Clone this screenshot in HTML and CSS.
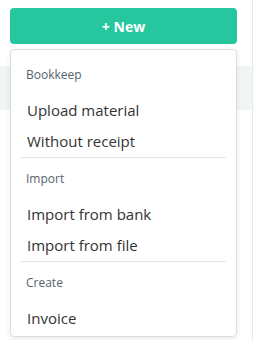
FILE: index.html
```html
<!DOCTYPE html>
<html lang="en">
<head>
    <meta charset="UTF-8">
    <meta name="viewport" content="width=device-width, initial-scale=1.0">
    <title>New</title>
    <link rel="stylesheet" href="styles.css">
</head>
<body>
    <div class="sidebar">
        <button class="new-btn" type="button">+ New</button>
        <div class="list">
            <div class="list-row active"></div>
            <div class="list-row"></div>
        </div>

        <div class="dropdown">
            <div class="menu-section first">
                <div class="menu-label">Bookkeep</div>
                <div class="menu-item">Upload material</div>
                <div class="menu-item">Without receipt</div>
            </div>
            <div class="menu-divider"></div>
            <div class="menu-section">
                <div class="menu-label">Import</div>
                <div class="menu-item">Import from bank</div>
                <div class="menu-item">Import from file</div>
            </div>
            <div class="menu-divider"></div>
            <div class="menu-section">
                <div class="menu-label">Create</div>
                <div class="menu-item">Invoice</div>
            </div>
        </div>
    </div>
</body>
</html>
```

FILE: styles.css
```css
body {
    margin: 0;
    background: #ffffff;
    font-family: "Open Sans", "Liberation Sans", sans-serif;
}
.sidebar {
    position: relative;
    width: 253px;
    height: 340px;
    border-right: 1px solid #e6e8ea;
    box-sizing: border-box;
    padding-top: 8px;
}
.new-btn {
    display: block;
    width: 227px;
    height: 36px;
    margin-left: 10px;
    padding: 0;
    border: none;
    border-radius: 4px;
    background: #26c69f;
    color: #ffffff;
    font-family: inherit;
    font-size: 14px;
    font-weight: 700;
}
.list {
    margin-top: 22px;
}
.list-row {
    height: 44px;
}
.list-row.active {
    background: #f2f5f5;
}
.dropdown {
    position: absolute;
    top: 49px;
    left: 10px;
    width: 227px;
    height: 288px;
    box-sizing: border-box;
    background: #ffffff;
    border: 1px solid #dcdfe2;
    border-radius: 4px;
    box-shadow: 0 2px 6px rgba(0, 0, 0, 0.08);
}
.menu-section {
    padding: 11px 0 0 15px;
}
.menu-section.first {
    padding-top: 15px;
}
.menu-label {
    font-size: 12px;
    line-height: 20px;
    color: #56626e;
    margin-bottom: 10px;
}
.menu-item {
    font-size: 15px;
    line-height: 31px;
    color: #333333;
    padding-left: 1px;
}
.menu-divider {
    height: 1px;
    margin: 0 10px;
    background: #e2e4e6;
}
```
